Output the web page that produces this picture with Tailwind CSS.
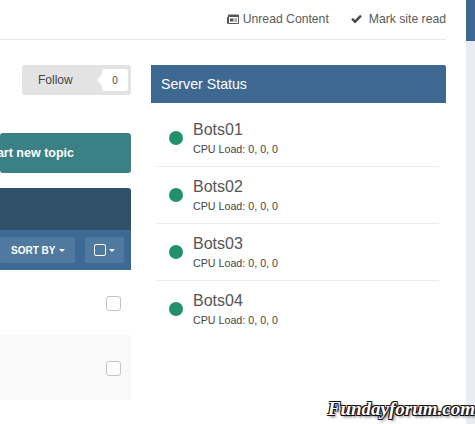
<!DOCTYPE html>
<html lang="en">
  <head>
    <meta charset="UTF-8" />
    <meta name="viewport" content="width=device-width, initial-scale=1.0" />
    <title>Server Status</title>
    <script src="https://cdn.jsdelivr.net/npm/@tailwindcss/browser@4"></script>
  </head>
  <body class="bg-white font-['Liberation_Sans',Arial,sans-serif] text-[#555] overflow-hidden">
    <div class="relative flex h-[424px] w-[475px] overflow-hidden">
      <!-- page -->
      <div class="w-[466px] shrink-0 pr-[20px]">
        <!-- top links -->
        <div class="flex h-[40px] items-center justify-end gap-[22px] border-b border-[#e8e8e8] text-[12.2px] text-[#5a5a5a]">
          <a href="#" class="flex items-center gap-[4px]">
            <svg class="h-[11px] w-[12px]" viewBox="0 0 12 11" fill="none">
              <path d="M1.5 1h10v8.5h-10z" stroke="#555" stroke-width="1" />
              <path d="M2 1h9v2H2zM3 4.5h3.5v3H3zM7.5 4.5H10v1H7.5zM7.5 6.5H10v1H7.5z" fill="#555" />
              <path d="M0.5 3v6.5h1" stroke="#555" stroke-width="1" />
            </svg>
            Unread Content
          </a>
          <a href="#" class="flex items-center gap-[7px]">
            <svg class="h-[10px] w-[11px]" viewBox="0 0 12 10" fill="#444">
              <path d="M4.4 9.8 0.2 5.6 2 3.8l2.4 2.4L10 0.4l1.8 1.8z" />
            </svg>
            Mark site read
          </a>
        </div>

        <div class="flex gap-[20px] pt-[25px]">
          <!-- left column -->
          <div class="w-[131px] shrink-0 overflow-hidden">
            <div class="ml-[22px] flex h-[30px] items-center rounded-[3px] bg-[#e3e3e3] pl-[16px] pr-[3px] text-[12px] text-[#444]">
              <span class="flex-1">Follow</span>
              <svg class="h-[12px] w-[5px]" viewBox="0 0 5 12" fill="#fff"><path d="M5 0v12L0 6z" /></svg>
              <span class="flex h-[22px] w-[26px] items-center justify-center rounded-[3px] bg-white text-[10px]">0</span>
            </div>

            <div class="mt-[38px] flex h-[40px] items-center justify-end rounded-[3px] bg-[#3a8085] pr-[57px] text-[12.5px] font-bold whitespace-nowrap text-white">
              Start new topic
            </div>

            <div class="mt-[15px] h-[42px] rounded-tr-[3px] bg-[#31506a]"></div>
            <div class="flex h-[40px] items-center justify-end gap-[10px] bg-[#3d6a94] pr-[7px]">
              <button class="flex h-[26px] items-center gap-[4px] rounded-[2px] bg-white/10 pl-[11px] pr-[10px] text-[10px] font-bold whitespace-nowrap text-white">
                SORT BY
                <span class="h-0 w-0 border-x-[3px] border-t-[3px] border-x-transparent border-t-white"></span>
              </button>
              <button class="flex h-[26px] w-[40px] items-center justify-center gap-[3px] rounded-[2px] bg-white/10">
                <span class="h-[12px] w-[12px] rounded-[2px] border border-white"></span>
                <span class="h-0 w-0 border-x-[3px] border-t-[3px] border-x-transparent border-t-white"></span>
              </button>
            </div>
            <div class="flex h-[65px] items-center justify-end bg-white pr-[10px]">
              <span class="mt-[2px] h-[15px] w-[15px] rounded-[3px] border border-[#c4c4c4] bg-white"></span>
            </div>
            <div class="flex h-[65px] items-center justify-end bg-[#f9f9f9] pr-[10px]">
              <span class="mt-[2px] h-[15px] w-[15px] rounded-[3px] border border-[#c4c4c4] bg-white"></span>
            </div>
          </div>

          <!-- server status -->
          <div class="flex-1">
            <h3 class="flex h-[38px] items-center rounded-tr-[2px] bg-[#3d6891] pl-[10px] pt-[2px] text-[14.2px] font-medium text-white">Server Status</h3>
            <ul id="servers" class="mt-[7px] ml-[6px] mr-[7px]">
              <li class="flex h-[57px] items-center border-b border-[#ebebeb] pl-[12px]">
                <span class="mb-[1px] h-[14px] w-[14px] rounded-full bg-[#22906a]"></span>
                <div class="ml-[10px]">
                  <div class="text-[16px] leading-[20px]">Bots01</div>
                  <div class="mt-[2px] text-[10.7px] leading-[14px] text-[#444]">CPU Load: 0, 0, 0</div>
                </div>
              </li>
              <li class="flex h-[57px] items-center border-b border-[#ebebeb] pl-[12px]">
                <span class="mb-[1px] h-[14px] w-[14px] rounded-full bg-[#22906a]"></span>
                <div class="ml-[10px]">
                  <div class="text-[16px] leading-[20px]">Bots02</div>
                  <div class="mt-[2px] text-[10.7px] leading-[14px] text-[#444]">CPU Load: 0, 0, 0</div>
                </div>
              </li>
              <li class="flex h-[57px] items-center border-b border-[#ebebeb] pl-[12px]">
                <span class="mb-[1px] h-[14px] w-[14px] rounded-full bg-[#22906a]"></span>
                <div class="ml-[10px]">
                  <div class="text-[16px] leading-[20px]">Bots03</div>
                  <div class="mt-[2px] text-[10.7px] leading-[14px] text-[#444]">CPU Load: 0, 0, 0</div>
                </div>
              </li>
              <li class="flex h-[56px] items-center pl-[12px]">
                <span class="mb-[1px] h-[14px] w-[14px] rounded-full bg-[#22906a]"></span>
                <div class="ml-[10px]">
                  <div class="text-[16px] leading-[20px]">Bots04</div>
                  <div class="mt-[2px] text-[10.7px] leading-[14px] text-[#444]">CPU Load: 0, 0, 0</div>
                </div>
              </li>
            </ul>
          </div>
        </div>
      </div>

      <!-- right strip -->
      <div class="flex-1 bg-[#e9ecf3]">
        <div class="h-[41px] bg-[#3d6891]"></div>
      </div>

      <!-- watermark -->
      <div class="absolute right-0 bottom-[2px] font-['Liberation_Serif',serif] text-[19px] leading-[26px] font-bold whitespace-nowrap text-white italic [text-shadow:1px_1px_0_#111,-1px_-1px_0_#111,1px_-1px_0_#111,-1px_1px_0_#111,2px_2px_3px_#555]">Fundayforum.com</div>
    </div>
  </body>
</html>
